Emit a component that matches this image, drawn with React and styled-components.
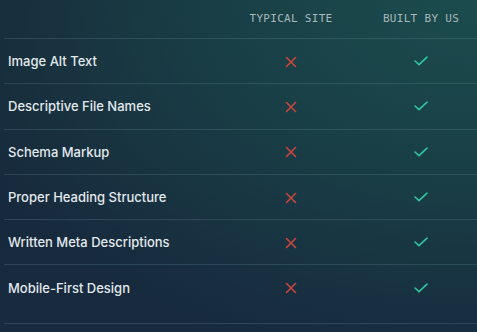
import React from "react";
import styled, { createGlobalStyle } from "styled-components";

const Global = createGlobalStyle`
  html, body { margin: 0; padding: 0; }
  body {
    width: 477px;
    height: 332px;
    overflow: hidden;
    background:
      radial-gradient(ellipse 640px 420px at 100% 0%, #1b4c4e 0%, #193f46 40%, rgba(23,42,62,0) 88%),
      linear-gradient(180deg, #172838 0%, #172a3f 100%);
    background-color: #172a3f;
    font-family: Inter, "Noto Sans", sans-serif;
  }
`;

const Table = styled.div`
  width: 482px;
  margin-left: 4px;
  display: grid;
  grid-template-columns: 222px 130px 130px;
`;

const HeadCell = styled.div`
  height: 38px;
  display: flex;
  align-items: center;
  justify-content: center;
  box-sizing: border-box;
  padding-bottom: 1px;
  font-family: "DejaVu Sans Mono", "Liberation Mono", monospace;
  font-size: 11px;
  letter-spacing: 0.3px;
  color: #a9b8be;
  text-transform: uppercase;
`;

const Cell = styled.div`
  height: ${(p) => (p.$last ? "60px" : "45.3px")};
  box-sizing: border-box;
  border-top: 1px solid rgba(120, 160, 170, 0.22);
  border-bottom: ${(p) => (p.$last ? "1px solid rgba(120,160,170,0.22)" : "none")};
  display: flex;
  align-items: center;
  padding-bottom: ${(p) => (p.$last ? "13px" : "0")};
  justify-content: ${(p) => (p.$label ? "flex-start" : "center")};
  padding-left: ${(p) => (p.$label ? "4px" : "0")};
  font-size: 13px;
  font-weight: 500;
  color: #e3e9ec;
  letter-spacing: 0;
`;

const Label = styled.span`
  line-height: 16px;
`;

const Cross = () => (
  <svg width="12" height="12" viewBox="0 0 12 12" style={{ marginTop: 1 }}>
    <path d="M1.5 1.5 L10.5 10.5 M10.5 1.5 L1.5 10.5" stroke="#c8463d" strokeWidth="1.6" strokeLinecap="round" fill="none" />
  </svg>
);

const Check = () => (
  <svg width="14" height="10" viewBox="0 0 14 10">
    <path d="M1 5 L5 8.6 L13 1.2" stroke="#2ec6a1" strokeWidth="1.6" strokeLinecap="round" strokeLinejoin="round" fill="none" />
  </svg>
);

const rows = [
  "Image Alt Text",
  "Descriptive File Names",
  "Schema Markup",
  "Proper Heading Structure",
  "Written Meta Descriptions",
  "Mobile-First Design",
];

export default function App() {
  return (
    <>
      <Global />
      <Table>
        <HeadCell />
        <HeadCell>Typical Site</HeadCell>
        <HeadCell>Built By Us</HeadCell>
        {rows.map((r, i) => {
          const last = i === rows.length - 1;
          return (
            <React.Fragment key={r}>
              <Cell $label $last={last}><Label>{r}</Label></Cell>
              <Cell $last={last}><Cross /></Cell>
              <Cell $last={last}><Check /></Cell>
            </React.Fragment>
          );
        })}
      </Table>
    </>
  );
}
